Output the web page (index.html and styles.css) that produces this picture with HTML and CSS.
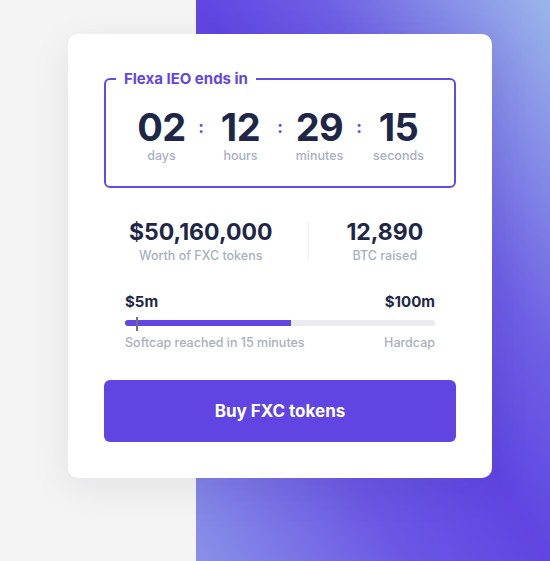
FILE: index.html
```html
<!DOCTYPE html>
<html lang="en">
<head>
    <meta charset="UTF-8">
    <meta name="viewport" content="width=device-width, initial-scale=1.0">
    <title>Flexa IEO</title>
    <link rel="stylesheet" href="styles.css">
</head>
<body>
    <div class="card">
        <fieldset class="countdown">
            <legend>Flexa IEO ends in</legend>
            <div class="timer">
                <div class="unit"><span class="num">02</span><span class="lbl">days</span></div>
                <span class="sep">:</span>
                <div class="unit"><span class="num">12</span><span class="lbl">hours</span></div>
                <span class="sep">:</span>
                <div class="unit"><span class="num">29</span><span class="lbl">minutes</span></div>
                <span class="sep">:</span>
                <div class="unit"><span class="num">15</span><span class="lbl">seconds</span></div>
            </div>
        </fieldset>

        <div class="stats">
            <div class="stat stat-left">
                <span class="stat-num">$50,160,000</span>
                <span class="stat-lbl">Worth of FXC tokens</span>
            </div>
            <div class="divider"></div>
            <div class="stat stat-right">
                <span class="stat-num">12,890</span>
                <span class="stat-lbl">BTC raised</span>
            </div>
        </div>

        <div class="progress">
            <div class="progress-top">
                <span>$5m</span>
                <span>$100m</span>
            </div>
            <div class="bar">
                <div class="fill" style="width: 53.5%"></div>
                <div class="marker"></div>
            </div>
            <div class="progress-bottom">
                <span>Softcap reached in 15 minutes</span>
                <span>Hardcap</span>
            </div>
        </div>

        <button class="buy">Buy FXC tokens</button>
    </div>
</body>
</html>
```

FILE: styles.css
```css
* {
    box-sizing: border-box;
}
body {
    margin: 0;
    min-height: 100vh;
    font-family: Inter, "Noto Sans", Arial, sans-serif;
    color: #1e2748;
    background:
        linear-gradient(#f4f4f4, #f4f4f4) 0 0 / 196px 100% no-repeat,
        linear-gradient(to top right, #8991e8 0%, #6b56e4 30%, #6045e2 50%, #6e5fe4 68%, #9bb6ea 100%) 196px 0 / calc(100% - 196px) 100% no-repeat;
    padding-top: 34px;
}
.card {
    width: 424px;
    margin-left: 68px;
    background: white;
    border-radius: 10px;
    padding: 36px;
    box-shadow: 0 10px 40px rgba(30, 30, 60, 0.08);
}

/* Countdown box */
.countdown {
    margin: 0;
    border: 2px solid #6549e6;
    border-radius: 6px;
    padding: 21px 0 23px;
}
.countdown legend {
    margin-left: 10px;
    padding: 0 8px;
    font-size: 15px;
    line-height: 17px;
    font-weight: 700;
    color: #6246e5;
}
.timer {
    display: flex;
    justify-content: center;
}
.unit {
    width: 60px;
    display: flex;
    flex-direction: column;
    align-items: center;
}
.num {
    font-size: 38px;
    line-height: 39px;
    font-weight: 700;
    letter-spacing: -0.5px;
}
.lbl {
    margin-top: 1px;
    font-size: 12.5px;
    line-height: 15px;
    font-weight: 500;
    color: #a9afbf;
}
.sep {
    width: 19px;
    text-align: center;
    font-size: 17px;
    font-weight: 700;
    line-height: 38px;
    color: #6246e5;
}

/* Stats */
.stats {
    display: flex;
    margin-top: 30px;
    padding-left: 25px;
}
.stat {
    display: flex;
    flex-direction: column;
    align-items: center;
}
.stat-left {
    padding-right: 36px;
}
.stat-right {
    padding-left: 37px;
}
.stat-num {
    font-size: 23px;
    line-height: 28px;
    font-weight: 700;
}
.stat-lbl {
    margin-top: 2px;
    font-size: 12.5px;
    line-height: 16px;
    font-weight: 500;
    color: #a9afbf;
}
.divider {
    width: 1px;
    margin: 3px 0;
    background: #eef0f3;
}

/* Progress */
.progress {
    margin: 28px 21px 0;
}
.progress-top,
.progress-bottom {
    display: flex;
    justify-content: space-between;
}
.progress-top {
    font-size: 15px;
    line-height: 20px;
    font-weight: 700;
}
.progress-bottom {
    font-size: 12.5px;
    line-height: 16px;
    font-weight: 500;
    color: #a9afbf;
}
.bar {
    position: relative;
    height: 6px;
    margin: 8px 0 9px;
    background: #ebebef;
    border-radius: 3px;
}
.fill {
    height: 100%;
    background: #6246e5;
    border-radius: 3px 0 0 3px;
}
.marker {
    position: absolute;
    left: 11px;
    top: -3px;
    width: 2px;
    height: 14px;
    background: #6c7080;
}

/* Button */
.buy {
    display: block;
    width: 100%;
    height: 62px;
    margin-top: 29px;
    border: none;
    border-radius: 6px;
    background: #6045e2;
    color: white;
    font-family: inherit;
    font-size: 17px;
    font-weight: 700;
    cursor: pointer;
}
.buy:hover {
    background: #5236d6;
}
```
